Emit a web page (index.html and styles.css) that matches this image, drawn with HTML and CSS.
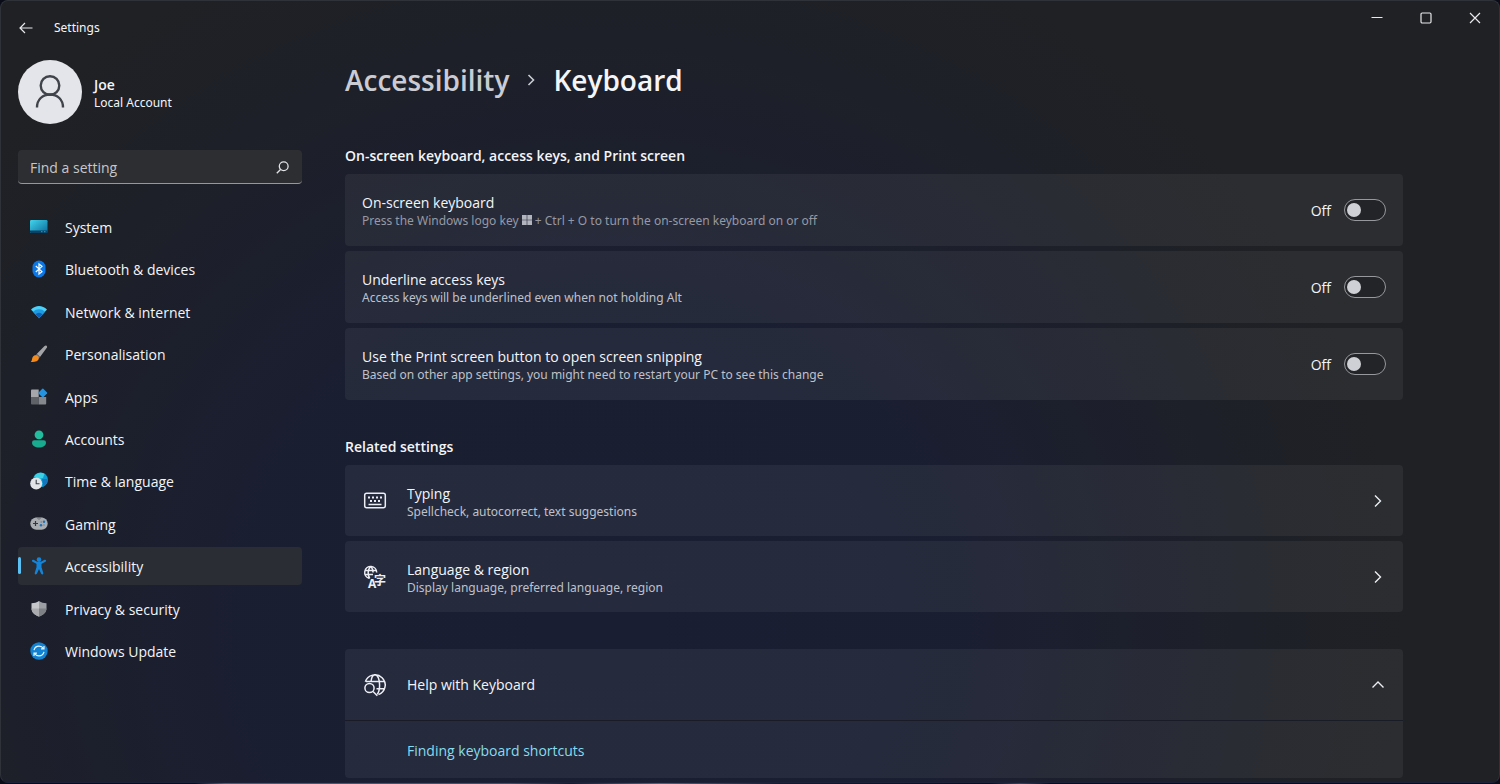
FILE: index.html
```html
<!DOCTYPE html>
<html lang="en-GB">
<head>
    <meta charset="UTF-8">
    <meta name="viewport" content="width=device-width, initial-scale=1.0">
    <title>Settings</title>
    <link rel="stylesheet" href="styles.css">
</head>
<body>
    <div class="window">
        <header class="titlebar">
            <button class="back-btn" aria-label="Back">
                <svg width="14" height="12" viewBox="0 0 14 12"><path d="M13.5 6H1M6 1L1 6l5 5"/></svg>
            </button>
            <span class="app-title">Settings</span>
            <div class="window-controls">
                <button aria-label="Minimise"><svg width="12" height="12" viewBox="0 0 12 12"><path d="M.5 5.5h11"/></svg></button>
                <button aria-label="Maximise"><svg width="12" height="12" viewBox="0 0 12 12"><rect x="1" y="1" width="10" height="10" rx="1.2"/></svg></button>
                <button aria-label="Close"><svg width="12" height="12" viewBox="0 0 12 12"><path d="M1 1l10 10M11 1L1 11"/></svg></button>
            </div>
        </header>

        <div class="layout">
            <aside class="sidebar">
                <div class="account">
                    <div class="avatar">
                        <svg width="32" height="36" viewBox="0 0 32 36"><circle cx="16" cy="11.5" r="9.3"/><path d="M3 33.5c0-8 5.500-13 13-13s13 5 13 13"/></svg>
                    </div>
                    <div>
                        <div class="account-name">Joe</div>
                        <div class="account-type">Local Account</div>
                    </div>
                </div>

                <form class="search">
                    <input type="text" placeholder="Find a setting" aria-label="Find a setting">
                    <button type="submit" aria-label="Search">
                        <svg width="13" height="13" viewBox="0 0 13 13"><circle cx="7.700" cy="5.300" r="4.400"/><path d="M4.500 8.500L.8 12.300"/></svg>
                    </button>
                </form>

                <nav>
                    <ul class="nav-list">
                        <li><a href="#">
                            <svg width="18" height="18" viewBox="0 0 18 18">
                                <defs><linearGradient id="screen" x2="1" y2="1"><stop offset="0" stop-color="#42d4ec"/><stop offset="1" stop-color="#0a6c9c"/></linearGradient></defs>
                                <rect y="2" width="17.500" height="13" rx="1.200" fill="url(#screen)"/>
                                <path d="M0 12.500h17.500v1.300q0 1.200-1.200 1.200H1.200Q0 15 0 13.800z" fill="#0b4266"/>
                                <path d="M11 13.700h1.500M14 13.700h1.500" stroke="#3ab4dc" stroke-width=".8"/>
                            </svg>
                            <span>System</span>
                        </a></li>
                        <li><a href="#">
                            <svg width="18" height="18" viewBox="0 0 18 18">
                                <rect x="2.500" y=".5" width="13" height="17" rx="6.500" fill="#0a78e8"/>
                                <path d="M5.800 6l6.200 5.600L9 14V4l3 2.400-6.200 5.600" fill="none" stroke="#fff" stroke-width="1.200"/>
                            </svg>
                            <span>Bluetooth &amp; devices</span>
                        </a></li>
                        <li><a href="#">
                            <svg width="18" height="18" viewBox="0 0 18 18">
                                <path d="M1 6.500C5.500 1.800 12.500 1.800 17 6.500l-8 8.700z" fill="#4bd0f8"/>
                                <path d="M3 8.700c3.500-3.300 8.500-3.300 12 0l-6 6.500z" fill="#1e9be2"/>
                                <path d="M5.400 11.300c2.300-2 4.900-2 7.200 0L9 15.200z" fill="#0b62b8"/>
                            </svg>
                            <span>Network &amp; internet</span>
                        </a></li>
                        <li><a href="#">
                            <svg width="18" height="18" viewBox="0 0 18 18">
                                <path d="M16.700.9c.7.6.4 1.500-.1 2.200L10 12 6.700 9.100 14.300 1.300c.7-.7 1.700-1 2.400-.4z" fill="#a3a4a7"/>
                                <path d="M6.700 9.100L10 12l-1.200 1.500-3.400-3z" fill="#6c6d70"/>
                                <path d="M5.200 10.300c2.200-.4 4.100 1.400 3.600 3.500-.6 2.700-4.800 3.600-8 3.100 1.300-.9.900-2 1.500-3.800.5-1.600 1.400-2.500 2.900-2.800z" fill="#f58a1c"/>
                            </svg>
                            <span>Personalisation</span>
                        </a></li>
                        <li><a href="#">
                            <svg width="18" height="18" viewBox="0 0 18 18">
                                <path d="M1 2.500q0-.9.900-.9h6.800v7.300H1z" fill="#a5a7aa"/>
                                <path d="M1 9h7.700v7.500H1.900q-.9 0-.9-.9z" fill="#5f6266"/>
                                <path d="M8.700 9h7.500v6.600q0 .9-.9.900H8.700z" fill="#85888c"/>
                                <path d="M12.300.8q.5-.4 1 0l3.700 3.700q.4.500 0 1l-3.700 3.700q-.5.400-1 0L8.600 5.500q-.4-.5 0-1z" fill="#2594e0"/>
                            </svg>
                            <span>Apps</span>
                        </a></li>
                        <li><a href="#">
                            <svg width="18" height="18" viewBox="0 0 18 18">
                                <circle cx="9" cy="4.800" r="4.400" fill="#22bd9f"/>
                                <path d="M4.300 10.300h9.400q2.300 0 2.300 2.200c0 3.400-3.200 5-7 5s-7-1.600-7-5q0-2.200 2.300-2.200z" fill="#19ab8f"/>
                            </svg>
                            <span>Accounts</span>
                        </a></li>
                        <li><a href="#">
                            <svg width="18" height="18" viewBox="0 0 18 18">
                                <circle cx="10.500" cy="7.800" r="7.400" fill="#0f9bd0"/>
                                <path d="M4 4.500C6 .8 11-.4 14.500 1.700L13 6 9 7z" fill="#3cd2e4"/>
                                <path d="M12 7l5.700 0c.2 3-1.400 6-4 7.400z" fill="#1675bc"/>
                                <circle cx="6.200" cy="11.400" r="6" fill="#e2e4e8"/>
                                <path d="M6.200 7.700v4h3.300" fill="none" stroke="#3c4148" stroke-width="1.100"/>
                            </svg>
                            <span>Time &amp; language</span>
                        </a></li>
                        <li><a href="#">
                            <svg width="18" height="18" viewBox="0 0 18 18">
                                <rect x=".3" y="2.500" width="17.400" height="12.200" rx="6.100" fill="#a9acb1"/>
                                <path d="M5.500 2.500h2l.5 1.500h2l.5-1.500h2" fill="none" stroke="#6a6e73" stroke-width=".8"/>
                                <path d="M5.500 6v5M3 8.500h5" stroke="#34373b" stroke-width="1.200"/>
                                <circle cx="11" cy="10.300" r="1.200" fill="#1c71b8"/><circle cx="14" cy="6.800" r="1.200" fill="#1c71b8"/>
                                <circle cx="11.200" cy="7" r=".7" fill="#4c87b5"/><circle cx="14" cy="10" r=".7" fill="#4c87b5"/>
                            </svg>
                            <span>Gaming</span>
                        </a></li>
                        <li><a href="#" class="active" aria-current="page">
                            <svg width="18" height="18" viewBox="0 0 18 18">
                                <circle cx="9" cy="2.600" r="2.300" fill="#1684d6"/>
                                <path d="M3 3.800L7 5.900h4l4-2.100" fill="none" stroke="#1684d6" stroke-width="2.200" stroke-linecap="round" stroke-linejoin="round"/>
                                <path d="M6.500 5.500h5v4.800l1.800 5.600q.2 1.200-.9 1.500-1 .2-1.400-.8L9 12l-2 4.600q-.4 1-1.400.8-1.100-.3-.9-1.500l1.800-5.600z" fill="#1684d6"/>
                            </svg>
                            <span>Accessibility</span>
                        </a></li>
                        <li><a href="#">
                            <svg width="18" height="18" viewBox="0 0 18 18">
                                <path d="M9 1c2.300 1.600 4.700 2.200 7.500 2.200v5c0 3.900-2.900 6.600-7.500 8.400z" fill="#9c9fa3"/>
                                <path d="M9 1C6.700 2.600 4.300 3.200 1.500 3.200v5c0 3.900 2.900 6.600 7.500 8.400z" fill="#c5c7ca"/>
                                <path d="M1.500 8.500H9v8.100c-4.200-1.600-7.200-4-7.500-8.100z" fill="#a9abaf"/>
                                <path d="M9 8.500h7.500c-.3 4.100-3.300 6.500-7.500 8.100z" fill="#7e8186"/>
                            </svg>
                            <span>Privacy &amp; security</span>
                        </a></li>
                        <li><a href="#">
                            <svg width="18" height="18" viewBox="0 0 18 18">
                                <circle cx="9" cy="9" r="8.700" fill="#1183d2"/>
                                <path d="M4 8.200C4.700 5.500 6.600 4.200 9 4.200c2 0 3.500.9 4.600 2.500M14 3.900v3h-3M14 9.800c-.7 2.700-2.600 4-5 4-2 0-3.500-.9-4.600-2.500M4 14.100v-3h3" fill="none" stroke="#e4f4ff" stroke-width="1.200"/>
                            </svg>
                            <span>Windows Update</span>
                        </a></li>
                    </ul>
                </nav>
            </aside>

            <main class="content">
                <h1 class="breadcrumb">
                    <a href="#">Accessibility</a>
                    <svg width="8" height="12" viewBox="0 0 8 12"><path d="M1.500 1l5 5-5 5"/></svg>
                    <span>Keyboard</span>
                </h1>

                <section>
                    <h2>On-screen keyboard, access keys, and Print screen</h2>
                    <div class="cards">
                        <div class="card">
                            <div class="card-text">
                                <label class="card-title" for="osk">On-screen keyboard</label>
                                <div class="card-desc dim">Press the Windows logo key <svg class="win-key" width="10" height="10" viewBox="0 0 10 10"><path d="M0 0h4.700v4.700H0zM5.300 0H10v4.700H5.300zM0 5.300h4.700V10H0zM5.300 5.300H10V10H5.300z"/></svg> + Ctrl + O to turn the on-screen keyboard on or off</div>
                            </div>
                            <span class="state">Off</span>
                            <input type="checkbox" role="switch" class="toggle" id="osk">
                        </div>
                        <div class="card">
                            <div class="card-text">
                                <label class="card-title" for="underline">Underline access keys</label>
                                <div class="card-desc">Access keys will be underlined even when not holding Alt</div>
                            </div>
                            <span class="state">Off</span>
                            <input type="checkbox" role="switch" class="toggle" id="underline">
                        </div>
                        <div class="card">
                            <div class="card-text">
                                <label class="card-title" for="snip">Use the Print screen button to open screen snipping</label>
                                <div class="card-desc">Based on other app settings, you might need to restart your PC to see this change</div>
                            </div>
                            <span class="state">Off</span>
                            <input type="checkbox" role="switch" class="toggle" id="snip">
                        </div>
                    </div>
                </section>

                <section>
                    <h2>Related settings</h2>
                    <div class="cards">
                        <a href="#" class="card card-link">
                            <svg class="card-icon" width="24" height="24" viewBox="0 0 24 24">
                                <rect x="1.700" y="4.200" width="20.600" height="14.600" rx="2"/>
                                <path d="M5 8.500h2M9 8.500h2M13 8.500h2M17 8.500h2M7 12h2M11 12h2M15 12h2" stroke-width="1.800"/>
                                <path d="M5.500 15.500h13"/>
                            </svg>
                            <div class="card-text">
                                <div class="card-title">Typing</div>
                                <div class="card-desc">Spellcheck, autocorrect, text suggestions</div>
                            </div>
                            <svg class="chevron" width="16" height="16" viewBox="0 0 16 16"><path d="M5 2.500L10.500 8 5 13.500"/></svg>
                        </a>
                        <a href="#" class="card card-link">
                            <svg class="card-icon" width="24" height="24" viewBox="0 0 24 24">
                                <path d="M6 13.200A6 6 0 1 1 13.700 7.500M2 5.500h11.500M2 9.500h8M7.700 1.500c-3.200 3-3.200 8.500-1 12M7.700 1.500c1.700 1.500 2.400 3.700 2.400 6"/>
                                <text x="5" y="23" class="glyph-latin">A</text>
                                <text x="11" y="20" class="glyph-han">字</text>
                            </svg>
                            <div class="card-text">
                                <div class="card-title">Language &amp; region</div>
                                <div class="card-desc">Display language, preferred language, region</div>
                            </div>
                            <svg class="chevron" width="16" height="16" viewBox="0 0 16 16"><path d="M5 2.500L10.500 8 5 13.500"/></svg>
                        </a>
                    </div>
                </section>

                <section class="help">
                    <button class="card help-toggle" aria-expanded="true">
                        <svg class="card-icon" width="24" height="24" viewBox="0 0 24 24">
                            <path d="M2.300 8.800A10.200 10.200 0 1 1 15.500 21.600M3 8.500h18M13.500 15.700h8M8 8.500c.5-4 2-6.700 4-6.700 3 0 4.600 5 4.600 10.200 0 4-.8 7.500-2.400 9.200"/>
                            <circle cx="6.500" cy="15" r="4.600"/>
                            <path d="M10 18.500l4.300 4.200"/>
                        </svg>
                        <span class="help-title">Help with Keyboard</span>
                        <svg class="chevron" width="16" height="16" viewBox="0 0 16 16"><path d="M2.500 10.500L8 5l5.500 5.500"/></svg>
                    </button>
                    <div class="help-body">
                        <a href="#">Finding keyboard shortcuts</a>
                    </div>
                </section>
            </main>
        </div>
    </div>
</body>
</html>
```

FILE: styles.css
```css
:root {
    --text: #f4f5f8;
    --text-soft: #bfc1ca;
    --text-dim: #9699a4;
    --card: rgba(255, 255, 255, 0.055);
    --link: #86dcee;
    --small-font: 'Noto Sans', 'Open Sans', sans-serif;
}

* {
    box-sizing: border-box;
}

body {
    margin: 0;
    padding-bottom: 1px;
    height: 100vh;
    overflow: hidden;
    font-family: 'Open Sans', 'Noto Sans', sans-serif;
    font-size: 14px;
    line-height: 20px;
    color: var(--text);
    background: linear-gradient(90deg, #0a0d18 13%, #2b5fc0 15%, #2450a8 34%, #101a3c 38%, #2b6da2 44%, #101a3c 52%, #0a0d18 66%, #1c4586 68%, #0a0d18 70%);
}

button {
    padding: 0;
    border: none;
    background: none;
    color: inherit;
    font: inherit;
}

a {
    color: inherit;
    text-decoration: none;
}

svg {
    flex: none;
    display: block;
}

.window {
    height: 100%;
    overflow: hidden;
    border: 1px solid #303239;
    border-bottom-color: #1d2238;
    border-radius: 8px;
    background:
        radial-gradient(ellipse 54% 95% at 40% 80%, #191e33 0%, rgba(25, 30, 50, 0.9) 45%, rgba(29, 32, 40, 0) 100%),
        #202124;
}

/* Title bar */
.titlebar {
    display: flex;
    align-items: center;
    height: 53px;
    padding-left: 18px;
}

.titlebar svg {
    fill: none;
    stroke: #e8e9ec;
    stroke-width: 1.2;
}

.app-title {
    margin-left: 21px;
    font-family: var(--small-font);
    font-size: 12px;
}

.window-controls {
    display: flex;
    align-self: flex-start;
    margin-left: auto;
}

.window-controls button {
    display: flex;
    align-items: center;
    justify-content: center;
    width: 49px;
    height: 33px;
}

.layout {
    display: flex;
    gap: 43px;
    padding-left: 17px;
}

/* Sidebar */
.sidebar {
    flex: none;
    width: 284px;
    padding-top: 6px;
}

.account {
    display: flex;
    align-items: center;
    gap: 12px;
}

.avatar {
    display: flex;
    align-items: center;
    justify-content: center;
    width: 64px;
    height: 64px;
    border-radius: 50%;
    background: #e4e5ea;
}

.avatar svg {
    fill: none;
    stroke: #41434b;
    stroke-width: 2.4;
}

.account-name {
    padding-top: 4px;
    font-weight: 600;
    line-height: 18px;
}

.account-type {
    font-family: var(--small-font);
    font-size: 12px;
    line-height: 18px;
}

.search {
    display: flex;
    align-items: center;
    height: 34px;
    margin: 26px 0 24px;
    padding: 2px 13px 0 12px;
    border-bottom: 1px solid #96979b;
    border-radius: 4px;
    background: #2d2e32;
}

.search input {
    flex: 1;
    min-width: 0;
    padding: 0;
    border: none;
    outline: none;
    background: none;
    color: inherit;
    font: inherit;
}

.search input::placeholder {
    color: #c6c7cb;
    opacity: 1;
}

.search svg {
    fill: none;
    stroke: #e2e3e6;
    stroke-width: 1.3;
}

.nav-list {
    display: flex;
    flex-direction: column;
    justify-content: space-between;
    min-height: 462px;
    margin: 0;
    padding: 0;
    list-style: none;
}

.nav-list a {
    position: relative;
    display: flex;
    align-items: center;
    gap: 17px;
    height: 38px;
    padding-left: 12px;
    border-radius: 4px;
}

.nav-list a.active {
    background: #2a2d34;
}

.nav-list span {
    padding-top: 2px;
}

.nav-list a.active::before {
    content: "";
    position: absolute;
    left: 0;
    top: 10px;
    width: 3px;
    height: 17px;
    border-radius: 2px;
    background: #5cc0f5;
}

/* Content */
.content {
    flex: 1;
    max-width: 1058px;
    margin-right: 20px;
    padding-top: 6px;
}

.breadcrumb {
    display: flex;
    align-items: center;
    gap: 18px;
    margin: 0 0 46px;
    font-size: 28px;
    font-weight: 600;
    line-height: 40px;
}

.breadcrumb a {
    color: #cbccd3;
}

.breadcrumb svg {
    fill: none;
    stroke: #cbccd3;
    stroke-width: 1.6;
}

h2 {
    margin: 0 0 8px;
    font-size: 14px;
    font-weight: 600;
    line-height: 20px;
}

section {
    margin-bottom: 37px;
}

.cards {
    display: flex;
    flex-direction: column;
    gap: 5px;
}

.card {
    display: flex;
    align-items: center;
    width: 100%;
    min-height: 72px;
    padding: 0 17px;
    border-radius: 4px;
    background: var(--card);
}

.card-link {
    min-height: 71px;
}

.card-icon {
    overflow: visible;
    margin: 0 20px 0 1px;
    fill: none;
    stroke: #eceef4;
    stroke-width: 1.5;
}

.card-text {
    flex: 1;
    padding-top: 4px;
}

.card-title {
    display: block;
    line-height: 18px;
}

.card-desc {
    color: var(--text-soft);
    font-family: var(--small-font);
    font-size: 12px;
    line-height: 18px;
}

.card-desc.dim {
    color: var(--text-dim);
}

.win-key {
    display: inline-block;
    fill: #b3b5be;
}

.glyph-latin,
.glyph-han {
    fill: #eceef4;
    stroke: none;
    font-family: 'Open Sans', sans-serif;
    font-size: 12px;
    font-weight: 700;
}

.glyph-han {
    font-family: 'Noto Sans CJK SC', sans-serif;
}

.state {
    padding-top: 2px;
    margin-right: 13px;
}

.toggle {
    appearance: none;
    display: flex;
    align-items: center;
    width: 42px;
    height: 22px;
    margin: 0;
    padding: 0 2px;
    border: 1px solid #97989d;
    border-radius: 11px;
    background: #232428;
}

.toggle::before {
    content: "";
    width: 14px;
    height: 14px;
    border-radius: 50%;
    background: #cfd0d5;
}

.toggle:checked {
    justify-content: flex-end;
    background: #5cc0f5;
}

.chevron {
    fill: none;
    stroke: #eceef4;
    stroke-width: 1.4;
}

.help {
    overflow: hidden;
    border-radius: 4px;
    background: var(--card);
}

.help-toggle {
    border-radius: 0;
    border-bottom: 1px solid #191b26;
    background: none;
}

.help-title {
    flex: 1;
    text-align: left;
}

.help-body {
    padding: 20px 62px 17px;
    color: var(--link);
}
```
